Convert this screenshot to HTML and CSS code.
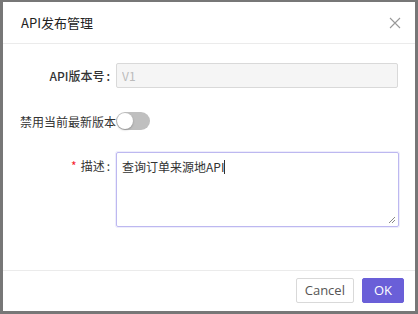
FILE: index.html
```html
<!DOCTYPE html>
<html lang="zh-CN">
<head>
    <meta charset="UTF-8">
    <title>API发布管理</title>
    <link rel="stylesheet" href="styles.css">
</head>
<body>
    <div class="modal">
        <div class="modal-header">
            <span class="modal-title">API发布管理</span>
            <span class="modal-close">
                <svg width="12" height="12" viewBox="0 0 12 12"><path d="M1 1L11 11M11 1L1 11" stroke="#999" stroke-width="1.1" fill="none"/></svg>
            </span>
        </div>

        <div class="modal-body">
            <div class="form-row">
                <label class="form-label strong">API版本号<span class="colon">:</span></label>
                <input type="text" class="form-input" value="V1" disabled>
            </div>
            <div class="form-row switch-row">
                <label class="form-label">禁用当前最新版本</label>
                <span class="switch"><span class="switch-knob"></span></span>
            </div>
            <div class="form-row textarea-row">
                <label class="form-label"><span class="required">*</span>描述<span class="colon">:</span></label>
                <div class="textarea">查询订单来源地API<span class="caret"></span>
                    <svg class="resize" width="8" height="8" viewBox="0 0 8 8"><path d="M7 1L1 7M7 4L4 7" stroke="#888" stroke-width="1" fill="none"/></svg>
                </div>
            </div>
        </div>

        <div class="modal-footer">
            <button class="btn">Cancel</button>
            <button class="btn btn-primary">OK</button>
        </div>
    </div>
</body>
</html>
```

FILE: styles.css
```css
* {
    box-sizing: border-box;
}

body {
    margin: 0;
    background: #777;
    font-family: "Noto Sans CJK SC", "Noto Sans", sans-serif;
    font-size: 12px;
    color: #333;
    height: 314px;
    overflow: hidden;
}

.modal {
    margin: 2px 3px 0 3px;
    width: 412px;
    height: 309px;
    background: #fff;
    display: flex;
    flex-direction: column;
}

.modal-header {
    height: 42px;
    border-bottom: 1px solid #ebebeb;
    display: flex;
    align-items: center;
    justify-content: space-between;
    padding: 0 14px 0 18px;
}

.modal-title {
    font-size: 13px;
    color: #222;
}

.modal-close {
    display: flex;
}

.modal-body {
    flex: 1;
    padding-top: 19px;
}

.form-row {
    display: flex;
    align-items: center;
}

.form-label {
    width: 113px;
    padding-left: 17px;
    text-align: right;
    white-space: nowrap;
    color: #333;
}

.form-label.strong {
    font-weight: 500;
}

.colon {
    margin: 0 6px 0 2px;
}

.required {
    color: #f5222d;
    margin-right: 4px;
}

.form-input {
    width: 282px;
    height: 25px;
    border: 1px solid #d9d9d9;
    border-radius: 2px;
    background: #f5f5f5;
    padding: 0 5px;
    font-family: inherit;
    font-size: 12px;
    color: #bbb;
}

.switch-row {
    margin-top: 24px;
}

.switch {
    width: 34px;
    height: 18px;
    border-radius: 9px;
    background: #bfbfbf;
    position: relative;
}

.switch-knob {
    position: absolute;
    left: 1px;
    top: 1px;
    width: 16px;
    height: 16px;
    border-radius: 50%;
    background: #fff;
    box-shadow: 0 1px 2px rgba(0, 0, 0, 0.25);
}

.textarea-row {
    margin-top: 22px;
    align-items: flex-start;
}

.textarea-row .form-label {
    padding-top: 5px;
}

.textarea {
    width: 283px;
    height: 75px;
    border: 1px solid #bdb8f0;
    border-radius: 2px;
    padding: 5px 5px;
    position: relative;
    box-shadow: 0 0 0 1px #eeedfc;
    line-height: 17px;
}

.caret {
    display: inline-block;
    width: 1px;
    height: 14px;
    background: #333;
    vertical-align: -2px;
}

.resize {
    position: absolute;
    right: 2px;
    bottom: 2px;
}

.modal-footer {
    height: 41px;
    border-top: 1px solid #ebebeb;
    display: flex;
    justify-content: flex-end;
    align-items: center;
    gap: 8px;
    padding: 0 11px 2px 0;
}

.btn {
    height: 25px;
    padding: 0 8px;
    border: 1px solid #d9d9d9;
    border-radius: 2px;
    background: #fff;
    font-family: "Open Sans", sans-serif;
    font-size: 13px;
    color: #555;
}

.btn-primary {
    background: #6a5fd8;
    border-color: #6a5fd8;
    color: #fff;
    padding: 0 11px;
}
```
